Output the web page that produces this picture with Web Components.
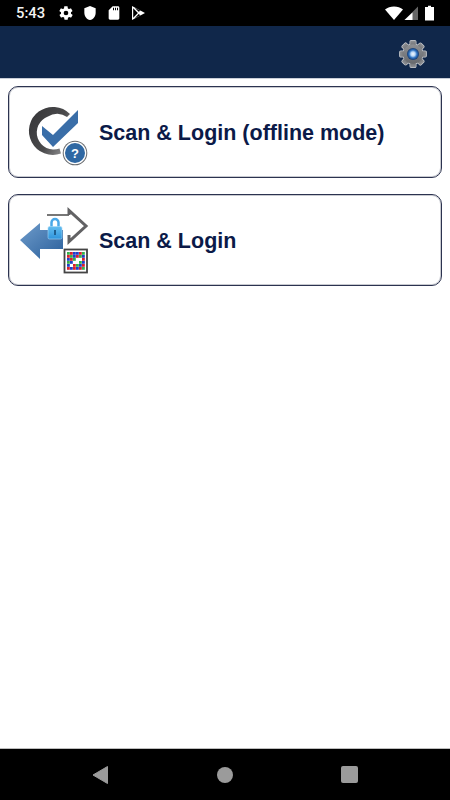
<!DOCTYPE html>
<html>
<head>
<meta charset="utf-8">
<title>Scan & Login</title>
<style>
  html, body { margin: 0; height: 100%; background: #fff; }
  body { display: flex; flex-direction: column; height: 800px; overflow: hidden; font-family: "Liberation Sans", Arial, sans-serif; }
  app-main { flex: 1; }
</style>
</head>
<body>
<status-bar></status-bar>
<app-bar></app-bar>
<app-main>
  <login-card label="Scan &amp; Login (offline mode)" icon="check"></login-card>
  <login-card label="Scan &amp; Login" icon="scan"></login-card>
</app-main>
<nav-bar></nav-bar>

<script>
class StatusBar extends HTMLElement {
    constructor() {
        super();
        this.shadow = this.attachShadow({ mode: 'open' });
    }
    connectedCallback() {
        this.shadow.innerHTML = `<style>
            :host { display: flex; align-items: center; height: 26px; background: #000; color: #f2f2f2; padding: 0 15px 0 16px; font: 500 14.8px Roboto, sans-serif; }
            .time { width: 42px; }
            .icons { display: flex; align-items: center; gap: 8px; }
            .right { margin-left: auto; display: flex; align-items: center; }
            .wifi { margin-right: 1px; }
            .signal { margin-right: 4px; }
            svg { display: block; fill: #fff; }
        </style>
        <span class="time">5:43</span>
        <div class="icons">
            <svg width="16" height="16" viewBox="0 0 24 24"><path fill-rule="evenodd" d="M19.4 13c.1-.3.1-.7.1-1s0-.7-.1-1l2.100-1.600c.2-.2.2-.4.1-.6l-2-3.500c-.1-.2-.4-.3-.6-.2l-2.500 1c-.5-.4-1.100-.7-1.700-1l-.4-2.600c0-.3-.2-.5-.5-.5h-4c-.3 0-.5.2-.5.4l-.4 2.700c-.6.2-1.200.6-1.700 1l-2.500-1c-.2-.1-.5 0-.6.2l-2 3.500c-.1.2-.1.4.1.6L4.600 11c-.1.3-.1.7-.1 1s0 .7.1 1l-2.100 1.600c-.2.2-.2.4-.1.6l2 3.500c.1.2.4.3.6.2l2.500-1c.5.4 1.100.7 1.700 1l.4 2.600c0 .3.2.5.5.5h4c.3 0 .5-.2.5-.4l.4-2.700c.6-.2 1.200-.6 1.700-1l2.500 1c.2.1.5 0 .6-.2l2-3.500c.1-.2.1-.4-.1-.6L19.400 13zM12 15.500a3.500 3.500 0 1 1 0-7 3.500 3.500 0 0 1 0 7z"/></svg>
            <svg width="16" height="16" viewBox="0 0 24 24"><path d="M12 1.500 3.500 5v6.500c0 5.200 3.600 10 8.500 11 4.900-1 8.500-5.800 8.500-11V5z"/></svg>
            <svg width="16" height="16" viewBox="0 0 24 24"><path fill-rule="evenodd" d="M18 2h-8L4 8v12c0 1.100.9 2 2 2h12c1.100 0 2-.9 2-2V4c0-1.100-.9-2-2-2zM12 8h-1.500V4H12zm3 0h-1.500V4H15zm3 0h-1.500V4H18z"/></svg>
            <svg width="16" height="16" viewBox="0 0 24 24"><path fill-rule="evenodd" d="M3 1.500 22.500 12 3 22.500zM4.800 5V19l7-7zM7 4.300l6 6 2.500-1.600zM13 13.600l-6 6.100 8.500-4.500z"/></svg>
        </div>
        <div class="right">
            <svg class="wifi" width="18" height="16" viewBox="0 0 18 16"><path d="M0 4.500C2.500 2.500 5.500 1.500 9 1.500s6.500 1 9 3L9 15z"/></svg>
            <svg class="signal" width="15" height="16" viewBox="0 0 15 16"><path d="M14 1.500V15H.5z" fill="#666"/><path d="M8.500 7.500V15H.5z"/></svg>
            <svg width="12" height="16" viewBox="0 0 12 16"><path d="M5 2V.8h3V2h3v13.500H2V2z"/></svg>
        </div>`;
    }
}
customElements.define('status-bar', StatusBar);

class AppBar extends HTMLElement {
    constructor() {
        super();
        this.shadow = this.attachShadow({ mode: 'open' });
    }
    connectedCallback() {
        let teeth = '';
        for (let a = 0; a < 360; a += 45) {
            teeth += `<rect x="11.200" y="0.800" width="5.600" height="6" rx="1" transform="rotate(${a} 14 14)"/>`;
        }
        this.shadow.innerHTML = `<style>
            :host { display: flex; align-items: center; justify-content: flex-end; box-sizing: border-box; height: 53px; padding: 3px 23px 0 0; background: #10274a; border-bottom: 1px solid #c9ced8; }
            svg { display: block; }
        </style>
        <svg width="28" height="28" viewBox="0 0 28 28">
            <defs>
                <radialGradient id="dot"><stop offset="0" stop-color="#f2f8ff"/><stop offset=".35" stop-color="#bcd8f5"/><stop offset=".65" stop-color="#2f74c4"/><stop offset="1" stop-color="#17396c"/></radialGradient>
                <linearGradient id="steel" x1="0" y1="0" x2="0" y2="1"><stop offset="0" stop-color="#8e9094"/><stop offset="1" stop-color="#66686c"/></linearGradient>
            </defs>
            <g fill="#c4c7cc" stroke="#c4c7cc" stroke-width="1.400">${teeth}<circle cx="14" cy="14" r="9.800"/></g>
            <g fill="url(#steel)">${teeth}<circle cx="14" cy="14" r="9.800"/></g>
            <circle cx="14" cy="14" r="6" fill="url(#dot)"/>
        </svg>`;
    }
}
customElements.define('app-bar', AppBar);

class AppMain extends HTMLElement {
    constructor() {
        super();
        this.shadow = this.attachShadow({ mode: 'open' });
    }
    connectedCallback() {
        this.shadow.innerHTML = `<style>
            :host { display: flex; flex-direction: column; gap: 16px; padding: 7px 8px 0; background: #fff; }
        </style><slot></slot>`;
    }
}
customElements.define('app-main', AppMain);

// grid of the coloured code tile, one letter a cell
const QR = ['grbbrg', 'rgbrgb', 'brgwwr', 'gbwwgb', 'bwrgbr', 'rbrbrg'];
const QR_COLORS = { r: '#d8202c', g: '#35b04c', b: '#1f3fc8', w: '#ffffff' };

function qrCells() {
    let out = '';
    QR.forEach((row, y) => {
        [...row].forEach((c, x) => {
            out += `<rect x="${67 + x * 3}" y="${252 + y * 3}" width="2.800" height="2.800" fill="${QR_COLORS[c]}"/>`;
        });
    });
    return out;
}

const ICONS = {
    check: `<svg width="72" height="72" viewBox="18 96 72 72">
        <defs>
            <linearGradient id="ring" gradientUnits="userSpaceOnUse" x1="29" y1="125" x2="72" y2="150"><stop offset="0" stop-color="#3a3a3c"/><stop offset=".5" stop-color="#4a4a4c"/><stop offset="1" stop-color="#a0a0a2"/></linearGradient>
        </defs>
        <path d="M70 114A24 24 0 1 0 61 153.500L59.500 148.500A16.500 16.500 0 0 1 48 116.500 16.500 16.500 0 0 1 67 117z" fill="url(#ring)"/>
        <path d="M78 110V123L53 147 42 135V126L53 135z" fill="#3a6ea8"/>
        <circle cx="75" cy="153" r="13" fill="#fff"/>
        <circle cx="75" cy="153" r="12.300" fill="#66696d"/>
        <circle cx="75" cy="153" r="11.300" fill="#fff"/>
        <circle cx="75" cy="153" r="10" fill="#2f68a3"/>
        <text x="75" y="157.500" text-anchor="middle" font-family="Liberation Sans, sans-serif" font-weight="700" font-size="13" fill="#fff">?</text>
    </svg>`,
    scan: `<svg width="72" height="72" viewBox="18 204 72 72">
        <defs>
            <linearGradient id="arrow" x1="0" y1="0" x2="1" y2="1"><stop offset="0" stop-color="#6f9ccb"/><stop offset="1" stop-color="#2a5f9b"/></linearGradient>
            <linearGradient id="lock" x1="0" y1="0" x2="0" y2="1"><stop offset="0" stop-color="#62bdf0"/><stop offset="1" stop-color="#2f94dc"/></linearGradient>
        </defs>
        <path d="M47 215H69" fill="none" stroke="#777" stroke-width="2"/>
        <path d="M69 215V210.500L86 226 69 241.500V235" fill="none" stroke="#626264" stroke-width="3"/>
        <path d="M20 240 40 223V230H63V249H40V259z" fill="url(#arrow)"/>
        <path d="M51.500 227V222.500a3.500 3.500 0 0 1 7 0V227" fill="none" stroke="#4aa8e8" stroke-width="2.500"/>
        <rect x="48" y="226.500" width="14" height="12.500" rx="1.500" fill="url(#lock)" stroke="#a9d8f5" stroke-width=".6"/>
        <rect x="54" y="230" width="2" height="5" fill="#1f5f90"/>
        <rect x="64.500" y="249.500" width="22.500" height="23" fill="#fff" stroke="#444" stroke-width="1.800"/>
        ${qrCells()}
    </svg>`
};

class LoginCard extends HTMLElement {
    constructor() {
        super();
        this.shadow = this.attachShadow({ mode: 'open' });
    }
    connectedCallback() {
        this.shadow.innerHTML = `<style>
            :host { display: flex; align-items: center; gap: 9px; box-sizing: border-box; height: 92px; padding-left: 9px; background: #fff; border: 1px solid #2c3350; border-radius: 10px; box-shadow: inset 0 0 0 1px #c8cad0; }
            svg { display: block; flex: none; }
            span { margin-top: 2px; font: 700 21.5px "Liberation Sans", Arial, sans-serif; color: #0b1a48; }
        </style>
        ${ICONS[this.getAttribute('icon')]}
        <span>${this.getAttribute('label').replace('&', '&amp;')}</span>`;
    }
}
customElements.define('login-card', LoginCard);

class NavBar extends HTMLElement {
    constructor() {
        super();
        this.shadow = this.attachShadow({ mode: 'open' });
    }
    connectedCallback() {
        this.shadow.innerHTML = `<style>
            :host { display: flex; justify-content: space-between; align-items: center; box-sizing: border-box; height: 52px; background: #000; border-top: 1px solid #bdbdbd; padding: 0 92px; }
            svg { display: block; }
        </style>
        <svg width="16" height="18" viewBox="0 0 16 18"><path d="M15.500 .5V17.500L1 9z" fill="#9b9b9b" stroke="#9b9b9b" stroke-linejoin="round"/></svg>
        <svg width="16" height="16" viewBox="0 0 16 16"><circle cx="8" cy="8" r="8" fill="#9b9b9b"/></svg>
        <svg width="17" height="17" viewBox="0 0 17 17"><rect width="17" height="17" rx="2" fill="#9b9b9b"/></svg>`;
    }
}
customElements.define('nav-bar', NavBar);
</script>
</body>
</html>
